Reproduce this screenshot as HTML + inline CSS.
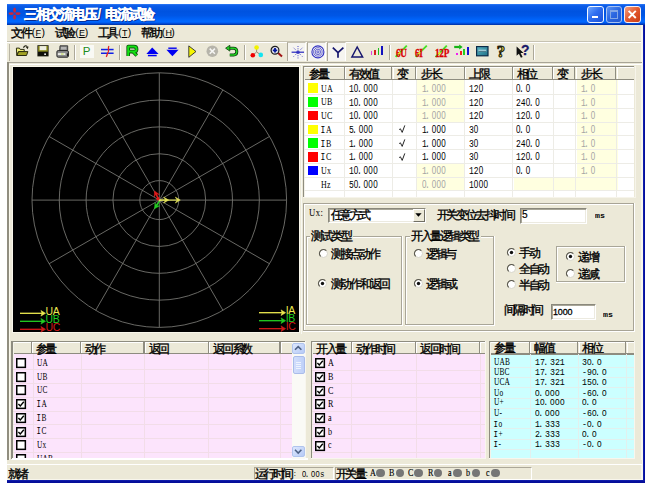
<!DOCTYPE html><html><head><meta charset="utf-8"><title>三相交流电压/电流试验</title><style>
html,body{margin:0;padding:0;}
body{width:647px;height:487px;position:relative;overflow:hidden;background:#fff;font-family:"Liberation Sans",sans-serif;}
.t{position:absolute;white-space:nowrap;font-family:"Liberation Sans",sans-serif;}
.m{font-family:"Liberation Mono",monospace;transform-origin:0 0;}
.z{font-style:normal;font-family:"Liberation Sans",sans-serif;letter-spacing:0.044em;line-height:0;}
.c{font-style:normal;display:inline-block;text-align:center;overflow:visible;-webkit-text-stroke:0.35px currentColor;}
.mi{font-style:normal;font-family:"Liberation Mono",monospace;line-height:0;margin-left:-0.06em;margin-right:0.06em;}
.p{font-style:normal;margin-left:-0.22em;margin-right:0.22em;line-height:0;}
svg{position:absolute;overflow:visible;}
</style></head><body>
<div style="position:absolute;left:7px;top:25px;width:635px;height:455px;background:#ECE9D8"></div>
<div style="position:absolute;left:641.2px;top:25px;width:1.4px;height:455px;background:#F8F6EC"></div>
<div style="position:absolute;left:642.6px;top:25px;width:2.6px;height:458px;background:linear-gradient(to right,#1C2CB8,#0612A2 40%,#040C98)"></div>
<div style="position:absolute;left:7px;top:478.7px;width:634.2px;height:1.2px;background:#F8F6EC"></div>
<div style="position:absolute;left:7px;top:479.9px;width:638.2px;height:2.9px;background:linear-gradient(to bottom,#1626B0,#06109E 40%,#040C96)"></div>
<div style="position:absolute;left:7px;top:4px;width:638px;height:21px;background:linear-gradient(to bottom,#2F7AF6 0%,#0C5CE8 8%,#0053E0 35%,#0056E6 55%,#0064FA 75%,#0068FF 84%,#0058EC 91%,#003CBC 95%,#0034A8 100%)"></div>
<svg style="left:8px;top:7px" width="14" height="14" viewBox="0 0 14 14"><g fill="#C8283C"><ellipse cx="6.6" cy="3.2" rx="1.4" ry="2.6"/><ellipse cx="6.6" cy="10" rx="1.4" ry="2.6"/><ellipse cx="3.2" cy="6.6" rx="2.6" ry="1.4"/><ellipse cx="10" cy="6.6" rx="2.6" ry="1.4"/></g></svg>
<div class="t" style="left:23.95px;top:8px;font-size:13.8px;line-height:13.8px;color:#fff;font-weight:bold;text-shadow:1px 1px 0 #0A2A8A;"><i class="c" style="width:12px">三</i><i class="c" style="width:12px">相</i><i class="c" style="width:12px">交</i><i class="c" style="width:12px">流</i><i class="c" style="width:12px">电</i><i class="c" style="width:12px">压</i></div>
<div class="t" style="left:97.46px;top:8px;font-size:13.81px;line-height:13.81px;font-family:'Liberation Sans',sans-serif;color:#fff;font-weight:bold;text-shadow:1px 1px 0 #0A2A8A;">/</div>
<div class="t" style="left:104.95px;top:8px;font-size:13.8px;line-height:13.8px;color:#fff;font-weight:bold;text-shadow:1px 1px 0 #0A2A8A;"><i class="c" style="width:12px">电</i><i class="c" style="width:12px">流</i><i class="c" style="width:12px">试</i><i class="c" style="width:12px">验</i></div>
<div style="position:absolute;left:587.2px;top:5.7px;width:14.4px;height:15px;border:1px solid #F4F8FF;border-radius:3px;background:linear-gradient(135deg,#6FA8FF 0%,#2F6EF0 45%,#1A50D8 100%)"></div>
<div style="position:absolute;left:591.5px;top:15.6px;width:6px;height:2.2px;background:#fff"></div>
<div style="position:absolute;left:605.8px;top:5.7px;width:14.4px;height:15px;border:1px solid #A8C2F0;border-radius:3px;background:linear-gradient(135deg,#5A92F4 0%,#2A66E0 50%,#2458D0 100%)"></div>
<div style="position:absolute;left:609.6px;top:9.8px;width:6.4px;height:5.8px;border:1px solid #82A6E6;border-top-width:2px"></div>
<div style="position:absolute;left:624.2px;top:5.7px;width:14.4px;height:15px;border:1px solid #F8F0F0;border-radius:3px;background:linear-gradient(135deg,#F4A080 0%,#E2582E 50%,#C83C14 100%)"></div>
<svg style="left:624.2px;top:5.7px" width="17" height="17" viewBox="0 0 17 17"><path d="M4.6 4.8 L11.8 12 M11.8 4.8 L4.6 12" stroke="#fff" stroke-width="1.9"/></svg>
<div class="t" style="left:11.15px;top:27px;font-size:12px;line-height:12px;color:#000;"><i class="c" style="width:9.7px">文</i><i class="c" style="width:9.7px">件</i></div>
<div class="t" style="left:31.77px;top:28px;font-size:10.47px;line-height:10.47px;font-family:'Liberation Sans',sans-serif;color:#000;">(</div>
<div class="t" style="left:35.48px;top:29px;font-size:9.01px;line-height:9.01px;font-family:'Liberation Sans',sans-serif;color:#000;text-decoration:underline;">F</div>
<div class="t" style="left:41.38px;top:28px;font-size:10.47px;line-height:10.47px;font-family:'Liberation Sans',sans-serif;color:#000;">)</div>
<div class="t" style="left:54.55px;top:27px;font-size:12px;line-height:12px;color:#000;"><i class="c" style="width:9.7px">试</i><i class="c" style="width:9.7px">验</i></div>
<div class="t" style="left:75.17px;top:28px;font-size:10.47px;line-height:10.47px;font-family:'Liberation Sans',sans-serif;color:#000;">(</div>
<div class="t" style="left:78.88px;top:29px;font-size:9.01px;line-height:9.01px;font-family:'Liberation Sans',sans-serif;color:#000;text-decoration:underline;">E</div>
<div class="t" style="left:84.78px;top:28px;font-size:10.47px;line-height:10.47px;font-family:'Liberation Sans',sans-serif;color:#000;">)</div>
<div class="t" style="left:97.55px;top:27px;font-size:12px;line-height:12px;color:#000;"><i class="c" style="width:9.7px">工</i><i class="c" style="width:9.7px">具</i></div>
<div class="t" style="left:118.17px;top:28px;font-size:10.47px;line-height:10.47px;font-family:'Liberation Sans',sans-serif;color:#000;">(</div>
<div class="t" style="left:121.88px;top:29px;font-size:9.01px;line-height:9.01px;font-family:'Liberation Sans',sans-serif;color:#000;text-decoration:underline;">T</div>
<div class="t" style="left:127.78px;top:28px;font-size:10.47px;line-height:10.47px;font-family:'Liberation Sans',sans-serif;color:#000;">)</div>
<div class="t" style="left:141.05px;top:27px;font-size:12px;line-height:12px;color:#000;"><i class="c" style="width:9.7px">帮</i><i class="c" style="width:9.7px">助</i></div>
<div class="t" style="left:161.67px;top:28px;font-size:10.47px;line-height:10.47px;font-family:'Liberation Sans',sans-serif;color:#000;">(</div>
<div class="t" style="left:165.38px;top:29px;font-size:9.01px;line-height:9.01px;font-family:'Liberation Sans',sans-serif;color:#000;text-decoration:underline;">H</div>
<div class="t" style="left:171.28px;top:28px;font-size:10.47px;line-height:10.47px;font-family:'Liberation Sans',sans-serif;color:#000;">)</div>
<div style="position:absolute;left:7px;top:40.9px;width:634.2px;height:1.1px;background:#C6C2B2"></div>
<div style="position:absolute;left:7px;top:42px;width:634.2px;height:1.1px;background:#FFFFFF"></div>
<div style="position:absolute;left:7px;top:61.9px;width:635px;height:1.1px;background:#A8A496"></div>
<div style="position:absolute;left:8.6px;top:63.7px;width:633.4px;height:1.1px;background:#FFFFFF"></div>
<div style="position:absolute;left:9.3px;top:43.5px;width:1.1px;height:17px;background:#B8B4A4"></div>
<svg style="left:15px;top:44px" width="14" height="13" viewBox="0 0 14 13"><path d="M1.4 4.1 L4.4 4.1 L5.2 5.4 L9.2 5.4 L9.2 7.6 L3.5 7.6 L1.8 11.4 Z" fill="#EEEE78" stroke="#2A2A10" stroke-width="1"/><path d="M1.9 11.5 L3.6 7.6 L12.9 7.6 L11.5 11.5 Z" fill="#A2A224" stroke="#2A2A10" stroke-width="1" stroke-linejoin="round"/><path d="M8.4 3.6 Q10.2 0.4 12.4 2.8" fill="none" stroke="#262618" stroke-width="1.2"/><path d="M10.8 3.2 L13.6 2.4 L12.8 5.2 Z" fill="#262618"/></svg>
<svg style="left:36.5px;top:45.4px" width="12" height="12" viewBox="0 0 12 12"><rect x="0.4" y="0.2" width="11.2" height="11.2" fill="#1C1C10"/><rect x="1.2" y="1" width="9.6" height="5.8" fill="#8C8C18"/><rect x="2.6" y="1.1" width="6.8" height="4.1" fill="#EEEEE2"/><rect x="1.2" y="6.8" width="9.6" height="3.8" fill="#0E0E08"/><rect x="7.3" y="8.4" width="1.6" height="1.6" fill="#fff"/></svg>
<svg style="left:55.5px;top:44.5px" width="13" height="13" viewBox="0 0 13 13"><path d="M4 0.8 L11.7 0.8 L11.7 5.6 L3.7 5.6 Z" fill="#8A8A8A" stroke="#303030" stroke-width="0.9"/><rect x="5" y="2" width="5.2" height="2.4" fill="#B4B4B4"/><rect x="0.9" y="5.6" width="11.5" height="6.6" rx="1.3" fill="#8E8E8E" stroke="#262626" stroke-width="1"/><rect x="1.8" y="8.2" width="7.6" height="1.7" fill="#F4F4F0"/><rect x="5" y="8.4" width="2.6" height="1.3" fill="#C8E070"/><rect x="10.9" y="8.4" width="1.5" height="2.6" fill="#1E1E1E"/></svg>
<div style="position:absolute;left:74px;top:44.6px;width:1.1px;height:15.2px;background:#ACA899"></div>
<div style="position:absolute;left:75.1px;top:44.6px;width:1px;height:15.2px;background:#FFFFFF"></div>
<div style="position:absolute;left:79.6px;top:45px;width:14.4px;height:13px;background:#F9F9F5"></div>
<div class="t" style="left:82.66px;top:46px;font-size:11.48px;line-height:11.48px;font-family:'Liberation Sans',sans-serif;color:#1C8C1C;">P</div>
<svg style="left:100.5px;top:45px" width="13" height="13" viewBox="0 0 13 13"><rect x="0" y="3.8" width="12.6" height="1.5" fill="#1020E8"/><rect x="0" y="7.5" width="12.6" height="1.5" fill="#1020E8"/><path d="M7.9 1 C6.4 3.4 8.6 5.4 7 7.6 C5.8 9.2 6.4 10.4 5.2 11.8" fill="none" stroke="#E42020" stroke-width="1.3"/></svg>
<div style="position:absolute;left:119.3px;top:44.6px;width:1.1px;height:15.2px;background:#ACA899"></div>
<div style="position:absolute;left:120.4px;top:44.6px;width:1px;height:15.2px;background:#FFFFFF"></div>
<svg style="left:125.5px;top:45.4px" width="13" height="12" viewBox="0 0 13 12"><path d="M2.2 11 L2.2 1.6 L8 1.6 Q10.6 1.6 10.6 4.2 Q10.6 6.6 8 6.6 L2.2 6.6 M6.8 6.6 L10.8 10.6" fill="none" stroke="#0A4A0A" stroke-width="3.6" stroke-linejoin="round"/><path d="M2.2 11 L2.2 1.6 L8 1.6 Q10.6 1.6 10.6 4.2 Q10.6 6.6 8 6.6 L2.2 6.6 M6.8 6.6 L10.8 10.6" fill="none" stroke="#14E014" stroke-width="2" stroke-linejoin="round"/></svg>
<svg style="left:145.6px;top:46.6px" width="13" height="10" viewBox="0 0 13 10"><path d="M0.4 6.9 L6.2 0.4 L12.6 6.9 Z" fill="#0000F2"/><rect x="1.9" y="7.8" width="8.8" height="1.5" fill="#0000F2"/></svg>
<svg style="left:165.6px;top:46.9px" width="13" height="10" viewBox="0 0 13 10"><rect x="2.3" y="0.5" width="8.4" height="1.4" fill="#0000F2"/><path d="M0.4 2.8 L12.6 2.8 L6.4 9.3 Z" fill="#0000F2"/></svg>
<svg style="left:188px;top:44.5px" width="9" height="13" viewBox="0 0 9 13"><path d="M0.8 0.9 L8 6.5 L0.8 12.3 Z" fill="#F6F600" stroke="#2C2C2C" stroke-width="0.9"/></svg>
<svg style="left:205.5px;top:45.2px" width="13" height="13" viewBox="0 0 13 13"><circle cx="6.3" cy="6.2" r="5.8" fill="#B6B4AA"/><path d="M3.7 3.6 L8.9 8.8 M8.9 3.6 L3.7 8.8" stroke="#F6F6F4" stroke-width="1.5"/></svg>
<svg style="left:225.2px;top:45.2px" width="14" height="13" viewBox="0 0 14 13"><path d="M4 3.2 L8.6 3.2 Q11.8 3.2 11.8 6.6 Q11.8 10 8.6 10 L4.8 10" fill="none" stroke="#0E3E0E" stroke-width="3"/><path d="M4 3.2 L8.6 3.2 Q11.8 3.2 11.8 6.6 Q11.8 10 8.6 10 L4.8 10" fill="none" stroke="#22D022" stroke-width="1.5"/><path d="M0.6 3.2 L4.8 0.3 L4.8 6.1 Z" fill="#22D022" stroke="#0E3E0E" stroke-width="0.8"/></svg>
<div style="position:absolute;left:244px;top:44.6px;width:1.1px;height:15.2px;background:#ACA899"></div>
<div style="position:absolute;left:245.1px;top:44.6px;width:1px;height:15.2px;background:#FFFFFF"></div>
<svg style="left:249.5px;top:44.6px" width="14" height="14" viewBox="0 0 14 14"><path d="M6.6 7 L6.6 2.6 M6.6 7 L2.8 10.3 M6.6 7 L10.8 9.8" stroke="#9A8A7A" stroke-width="1"/><circle cx="6.6" cy="2.5" r="2.3" fill="#F2F200"/><circle cx="2.8" cy="10.3" r="2.3" fill="#F00000"/><circle cx="10.8" cy="9.9" r="2.3" fill="#14E4F0"/></svg>
<svg style="left:270px;top:45.4px" width="14" height="13" viewBox="0 0 14 13"><path d="M7.6 7.6 L12 11.6" stroke="#A01414" stroke-width="2"/><circle cx="5" cy="5.3" r="3.9" fill="#E6E6EE" stroke="#1E1E1E" stroke-width="1.2"/><path d="M2.8 5.3 L7.2 5.3 M5 3.1 L5 7.5" stroke="#001498" stroke-width="1.8"/></svg>
<div style="position:absolute;left:287.2px;top:42.3px;width:19.2px;height:18.8px;background:#F6F5F0;border-left:1.2px solid #ACA899;border-top:1px solid #C6C2B2;border-right:1px solid #fff;box-sizing:border-box"></div>
<div style="position:absolute;left:307.2px;top:42.3px;width:19.2px;height:18.8px;background:#F6F5F0;border-left:1.2px solid #ACA899;border-top:1px solid #C6C2B2;border-right:1px solid #fff;box-sizing:border-box"></div>
<div style="position:absolute;left:327.1px;top:42.3px;width:19.2px;height:18.8px;background:#F6F5F0;border-left:1.2px solid #ACA899;border-top:1px solid #C6C2B2;border-right:1px solid #fff;box-sizing:border-box"></div>
<svg style="left:290.5px;top:45px" width="14" height="14" viewBox="0 0 14 14"><path d="M0.6 7.2 L13 7.2" stroke="#2626BE" stroke-width="1.2"/><circle cx="7" cy="7.2" r="1.6" fill="#2626BE"/><g stroke="#4A4AC6" stroke-width="1" stroke-dasharray="1 1.3"><path d="M7 1 L7 13.4"/><path d="M2.6 2.8 L11.4 11.6"/><path d="M11.4 2.8 L2.6 11.6"/></g></svg>
<svg style="left:311px;top:45px" width="14" height="14" viewBox="0 0 14 14"><g fill="none" stroke="#3434C4"><circle cx="6.9" cy="6.9" r="6" stroke-width="1.1"/><circle cx="6.9" cy="6.9" r="4.3" stroke-width="0.75"/><circle cx="6.9" cy="6.9" r="2.7" stroke-width="0.75"/><circle cx="6.9" cy="6.9" r="1.1" stroke-width="0.8"/></g></svg>
<svg style="left:331.5px;top:46.5px" width="13" height="12" viewBox="0 0 13 12"><path d="M0.8 0.6 L6 5.6 L11.4 0.6 M6 5.6 L6 10.8" fill="none" stroke="#16166E" stroke-width="1.7"/></svg>
<svg style="left:350.5px;top:45.5px" width="14" height="13" viewBox="0 0 14 13"><path d="M6.2 1 L11.6 10.9 L0.9 10.9 Z" fill="none" stroke="#16166E" stroke-width="1.5"/></svg>
<div style="position:absolute;left:370.6px;top:51.1px;width:1.9px;height:3.7px;background:#E040E0"></div>
<div style="position:absolute;left:374.2px;top:49.7px;width:1.6px;height:5.1px;background:#D42020"></div>
<div style="position:absolute;left:377.5px;top:47.9px;width:1.6px;height:6.9px;background:#20C020"></div>
<div style="position:absolute;left:380.8px;top:46px;width:1.9px;height:8.8px;background:#1212BE"></div>
<div style="position:absolute;left:388.7px;top:44.6px;width:1.1px;height:15.2px;background:#ACA899"></div>
<div style="position:absolute;left:389.8px;top:44.6px;width:1px;height:15.2px;background:#FFFFFF"></div>
<svg style="left:395.2px;top:44.8px" width="13" height="13" viewBox="0 0 13 13"><path d="M0.6 11.8 L11.8 0.6" stroke="#44E024" stroke-width="1.8"/></svg>
<div class="t" style="left:395.52px;top:48px;font-size:11.48px;line-height:11.48px;font-family:'Liberation Serif',sans-serif;color:#E00000;font-weight:bold;transform:scaleX(0.8);transform-origin:0 0;letter-spacing:-0.3px;-webkit-text-stroke:0.3px #D00000;">6U</div>
<svg style="left:395.2px;top:44.8px" width="13" height="13" viewBox="0 0 13 13"><path d="M3.4 9 L5.2 7.2" stroke="#F0F020" stroke-width="1.6"/></svg>
<svg style="left:414.9px;top:44.8px" width="13" height="13" viewBox="0 0 13 13"><path d="M0.6 11.8 L11.8 0.6" stroke="#44E024" stroke-width="1.8"/></svg>
<div class="t" style="left:415.22px;top:48px;font-size:11.48px;line-height:11.48px;font-family:'Liberation Serif',sans-serif;color:#E00000;font-weight:bold;transform:scaleX(0.8);transform-origin:0 0;letter-spacing:-0.3px;-webkit-text-stroke:0.3px #D00000;">6I</div>
<svg style="left:414.9px;top:44.8px" width="13" height="13" viewBox="0 0 13 13"><path d="M3.4 9 L5.2 7.2" stroke="#F0F020" stroke-width="1.6"/></svg>
<svg style="left:434.7px;top:44.8px" width="13" height="13" viewBox="0 0 13 13"><path d="M0.6 11.8 L11.8 0.6" stroke="#44E024" stroke-width="1.8"/></svg>
<div class="t" style="left:435.02px;top:48px;font-size:11.48px;line-height:11.48px;font-family:'Liberation Serif',sans-serif;color:#E00000;font-weight:bold;transform:scaleX(0.8);transform-origin:0 0;letter-spacing:-0.3px;-webkit-text-stroke:0.3px #D00000;">12P</div>
<svg style="left:434.7px;top:44.8px" width="13" height="13" viewBox="0 0 13 13"><path d="M3.4 9 L5.2 7.2" stroke="#F0F020" stroke-width="1.6"/></svg>
<svg style="left:454.3px;top:44.6px" width="10" height="5" viewBox="0 0 10 5"><path d="M0.2 2 L5.6 2" stroke="#14B414" stroke-width="2.2"/><path d="M5.2 -0.6 L8.6 2 L5.2 4.6 Z" fill="#14B414"/></svg>
<div style="position:absolute;left:456.3px;top:52.8px;width:2.1px;height:2.6px;background:#F020F0"></div>
<div style="position:absolute;left:459.6px;top:50.6px;width:2px;height:4.8px;background:#F02020"></div>
<div style="position:absolute;left:463.1px;top:48.6px;width:2.1px;height:6.8px;background:#20D020"></div>
<div style="position:absolute;left:466.6px;top:46.8px;width:2px;height:8.6px;background:#1414D0"></div>
<svg style="left:475.6px;top:46.2px" width="13" height="11" viewBox="0 0 13 11"><defs><linearGradient id="mg" x1="0" y1="0" x2="1" y2="1"><stop offset="0" stop-color="#5AB8C8"/><stop offset="1" stop-color="#1E6E84"/></linearGradient></defs><rect x="0.6" y="0.6" width="11.4" height="9.2" fill="url(#mg)" stroke="#0A2A48" stroke-width="1.2"/><rect x="2.4" y="3.6" width="7.8" height="2.4" fill="#9CC8D4"/><rect x="2.4" y="5.2" width="7.8" height="0.8" fill="#3A6A7A"/></svg>
<div class="t" style="left:496.73px;top:44px;font-size:16.72px;line-height:16.72px;font-family:'Liberation Serif',sans-serif;color:#F0E040;font-weight:bold;-webkit-text-stroke:1.1px #1E1E10;">?</div>
<svg style="left:515.5px;top:45.6px" width="9" height="13" viewBox="0 0 9 13"><path d="M0.6 0.4 L0.6 9.8 L2.9 7.8 L4.9 11.8 L6.6 11 L4.6 7.1 L7.6 7.1 Z" fill="#101010"/></svg>
<div class="t" style="left:520.9px;top:44px;font-size:13.95px;line-height:13.95px;font-family:'Liberation Sans',sans-serif;color:#1A1A6A;font-weight:bold;-webkit-text-stroke:0.3px #1A1A6A;">?</div>
<div style="position:absolute;left:532.8px;top:44.6px;width:1.1px;height:15.2px;background:#ACA899"></div>
<div style="position:absolute;left:533.9px;top:44.6px;width:1px;height:15.2px;background:#FFFFFF"></div>
<div style="position:absolute;left:7px;top:62px;width:2px;height:402px;background:#918E80"></div>
<div style="position:absolute;left:9px;top:63.6px;width:1.4px;height:396px;background:#FAF8EC"></div>
<div style="position:absolute;left:12px;top:65.6px;width:288.4px;height:267.9px;background:#F8F6EA"></div>
<div style="position:absolute;left:13.3px;top:67.1px;width:285.7px;height:264.6px;background:#000"></div>
<div style="position:absolute;left:300.8px;top:64px;width:1.2px;height:270px;background:#F8F8F2"></div>
<svg style="left:0;top:0" width="647" height="487" viewBox="0 0 647 487"><g stroke="#767672" stroke-width="0.88" fill="none"><circle cx="159.3" cy="200.1" r="19.5"/><circle cx="159.3" cy="200.1" r="46.35"/><circle cx="159.3" cy="200.1" r="73.2"/><circle cx="159.3" cy="200.1" r="100.05"/><circle cx="159.3" cy="200.1" r="127.3"/><line x1="159.3" y1="200.1" x2="286.60" y2="200.10"/><line x1="159.3" y1="200.1" x2="269.55" y2="136.45"/><line x1="159.3" y1="200.1" x2="222.95" y2="89.85"/><line x1="159.3" y1="200.1" x2="159.30" y2="72.80"/><line x1="159.3" y1="200.1" x2="95.65" y2="89.85"/><line x1="159.3" y1="200.1" x2="49.05" y2="136.45"/><line x1="159.3" y1="200.1" x2="32.00" y2="200.10"/><line x1="159.3" y1="200.1" x2="49.05" y2="263.75"/><line x1="159.3" y1="200.1" x2="95.65" y2="310.35"/><line x1="159.3" y1="200.1" x2="159.30" y2="327.40"/><line x1="159.3" y1="200.1" x2="222.95" y2="310.35"/><line x1="159.3" y1="200.1" x2="269.55" y2="263.75"/></g><path d="M159.30 200.10 L177.20 200.10" stroke="#E2E25A" stroke-width="1.1" fill="none"/><path d="M180.30 200.10 L175.30 203.10 L177.20 200.10 L175.30 197.10 Z" fill="#E2E25A" stroke="#E2E25A" stroke-width="0.5" stroke-linejoin="round"/><path d="M159.30 200.10 L165.60 200.10" stroke="#E2E25A" stroke-width="1.1" fill="none"/><path d="M168.70 200.10 L163.70 203.10 L165.60 200.10 L163.70 197.10 Z" fill="#E2E25A" stroke="#E2E25A" stroke-width="0.5" stroke-linejoin="round"/><path d="M158.60 199.40 L155.95 193.92" stroke="#E01A1A" stroke-width="1.5" fill="none"/><path d="M154.50 190.90 L159.37 194.55 L155.95 193.92 L154.32 196.98 Z" fill="#E01A1A" stroke="#E01A1A" stroke-width="0.5" stroke-linejoin="round"/><path d="M159.60 200.80 L156.30 205.98" stroke="#22D022" stroke-width="1.5" fill="none"/><path d="M154.50 208.80 L155.04 202.74 L156.30 205.98 L159.76 205.75 Z" fill="#22D022" stroke="#22D022" stroke-width="0.5" stroke-linejoin="round"/><circle cx="158" cy="198.8" r="1.7" fill="#E01A1A"/><circle cx="159.8" cy="200.4" r="1" fill="#E2E25A"/></svg>
<svg style="left:0;top:0" width="647" height="487" viewBox="0 0 647 487"><path d="M20 313.3 L42.5 313.3" stroke="#EEEA50" stroke-width="1.3" fill="none"/><path d="M40.9 310.5 L45.5 313.3 L40.9 316.1 L42.1 313.3 Z" fill="#EEEA50" stroke="#EEEA50" stroke-width="0.6"/><path d="M259 312.7 L282.6 312.7" stroke="#EEEA50" stroke-width="1.3" fill="none"/><path d="M281.0 309.9 L285.6 312.7 L281.0 315.5 L282.20000000000005 312.7 Z" fill="#EEEA50" stroke="#EEEA50" stroke-width="0.6"/><path d="M20 321.3 L42.5 321.3" stroke="#22D022" stroke-width="1.3" fill="none"/><path d="M40.9 318.5 L45.5 321.3 L40.9 324.1 L42.1 321.3 Z" fill="#22D022" stroke="#22D022" stroke-width="0.6"/><path d="M259 320.7 L282.6 320.7" stroke="#22D022" stroke-width="1.3" fill="none"/><path d="M281.0 317.9 L285.6 320.7 L281.0 323.5 L282.20000000000005 320.7 Z" fill="#22D022" stroke="#22D022" stroke-width="0.6"/><path d="M20 329.3 L42.5 329.3" stroke="#D41A1A" stroke-width="1.3" fill="none"/><path d="M40.9 326.5 L45.5 329.3 L40.9 332.1 L42.1 329.3 Z" fill="#D41A1A" stroke="#D41A1A" stroke-width="0.6"/><path d="M259 328.7 L282.6 328.7" stroke="#D41A1A" stroke-width="1.3" fill="none"/><path d="M281.0 325.9 L285.6 328.7 L281.0 331.5 L282.20000000000005 328.7 Z" fill="#D41A1A" stroke="#D41A1A" stroke-width="0.6"/></svg>
<div class="t" style="left:45.59px;top:307px;font-size:10.47px;line-height:10.47px;font-family:'Liberation Sans',sans-serif;color:#EEEA50;letter-spacing:-0.3px;">UA</div>
<div class="t" style="left:45.59px;top:315px;font-size:10.47px;line-height:10.47px;font-family:'Liberation Sans',sans-serif;color:#22D022;letter-spacing:-0.3px;">UB</div>
<div class="t" style="left:45.59px;top:323px;font-size:10.47px;line-height:10.47px;font-family:'Liberation Sans',sans-serif;color:#D41A1A;letter-spacing:-0.3px;">UC</div>
<div class="t" style="left:285.86px;top:306px;font-size:10.47px;line-height:10.47px;font-family:'Liberation Sans',sans-serif;color:#EEEA50;letter-spacing:-0.5px;">IA</div>
<div class="t" style="left:285.86px;top:314px;font-size:10.47px;line-height:10.47px;font-family:'Liberation Sans',sans-serif;color:#22D022;letter-spacing:-0.5px;">IB</div>
<div class="t" style="left:285.86px;top:322px;font-size:10.47px;line-height:10.47px;font-family:'Liberation Sans',sans-serif;color:#D41A1A;letter-spacing:-0.5px;">IC</div>
<div style="position:absolute;left:303.3px;top:66.2px;width:331.2px;height:130.8px;background:#fff"></div>
<div style="position:absolute;left:303.3px;top:66.2px;width:1px;height:130.8px;background:#8E8C80"></div>
<div style="position:absolute;left:304.3px;top:67.2px;width:0.9px;height:129.6px;background:#F4F2E8"></div>
<div style="position:absolute;left:303.3px;top:66.2px;width:331.2px;height:1.1px;background:#8E8C80"></div>
<div style="position:absolute;left:305.2px;top:67.3px;width:329.3px;height:11.6px;background:#ECE9D8"></div>
<div style="position:absolute;left:305.2px;top:67.3px;width:329.3px;height:0.9px;background:#FFFFFF"></div>
<div style="position:absolute;left:305.2px;top:78.9px;width:329.3px;height:1.2px;background:#8E8C80"></div>
<div style="position:absolute;left:343.5px;top:67.3px;width:1.1px;height:11.6px;background:#8E8C80"></div>
<div style="position:absolute;left:344.6px;top:68.2px;width:0.9px;height:10.7px;background:#FFFFFF"></div>
<div style="position:absolute;left:391.4px;top:67.3px;width:1.1px;height:11.6px;background:#8E8C80"></div>
<div style="position:absolute;left:392.5px;top:68.2px;width:0.9px;height:10.7px;background:#FFFFFF"></div>
<div style="position:absolute;left:415.2px;top:67.3px;width:1.1px;height:11.6px;background:#8E8C80"></div>
<div style="position:absolute;left:416.3px;top:68.2px;width:0.9px;height:10.7px;background:#FFFFFF"></div>
<div style="position:absolute;left:463.7px;top:67.3px;width:1.1px;height:11.6px;background:#8E8C80"></div>
<div style="position:absolute;left:464.8px;top:68.2px;width:0.9px;height:10.7px;background:#FFFFFF"></div>
<div style="position:absolute;left:511.5px;top:67.3px;width:1.1px;height:11.6px;background:#8E8C80"></div>
<div style="position:absolute;left:512.6px;top:68.2px;width:0.9px;height:10.7px;background:#FFFFFF"></div>
<div style="position:absolute;left:551.9px;top:67.3px;width:1.1px;height:11.6px;background:#8E8C80"></div>
<div style="position:absolute;left:553px;top:68.2px;width:0.9px;height:10.7px;background:#FFFFFF"></div>
<div style="position:absolute;left:574.4px;top:67.3px;width:1.1px;height:11.6px;background:#8E8C80"></div>
<div style="position:absolute;left:575.5px;top:68.2px;width:0.9px;height:10.7px;background:#FFFFFF"></div>
<div style="position:absolute;left:615.4px;top:67.3px;width:1.1px;height:11.6px;background:#8E8C80"></div>
<div style="position:absolute;left:616.5px;top:68.2px;width:0.9px;height:10.7px;background:#FFFFFF"></div>
<div style="position:absolute;left:634.5px;top:66.2px;width:1px;height:131.4px;background:#F6F4EA"></div>
<div style="position:absolute;left:303.3px;top:196.6px;width:332.2px;height:1px;background:#F6F4EA"></div>
<div class="t" style="left:308.55px;top:68px;font-size:12px;line-height:12px;color:#000;"><i class="c" style="width:9.6px">参</i><i class="c" style="width:9.6px">量</i></div>
<div class="t" style="left:349.05px;top:68px;font-size:12px;line-height:12px;color:#000;"><i class="c" style="width:9.6px">有</i><i class="c" style="width:9.6px">效</i><i class="c" style="width:9.6px">值</i></div>
<div class="t" style="left:396.95px;top:68px;font-size:12px;line-height:12px;color:#000;"><i class="c" style="width:9.6px">变</i></div>
<div class="t" style="left:421.25px;top:68px;font-size:12px;line-height:12px;color:#000;"><i class="c" style="width:9.6px">步</i><i class="c" style="width:9.6px">长</i></div>
<div class="t" style="left:469.15px;top:68px;font-size:12px;line-height:12px;color:#000;"><i class="c" style="width:9.6px">上</i><i class="c" style="width:9.6px">限</i></div>
<div class="t" style="left:516.55px;top:68px;font-size:12px;line-height:12px;color:#000;"><i class="c" style="width:9.6px">相</i><i class="c" style="width:9.6px">位</i></div>
<div class="t" style="left:556.55px;top:68px;font-size:12px;line-height:12px;color:#000;"><i class="c" style="width:9.6px">变</i></div>
<div class="t" style="left:581.05px;top:68px;font-size:12px;line-height:12px;color:#000;"><i class="c" style="width:9.6px">步</i><i class="c" style="width:9.6px">长</i></div>
<div style="position:absolute;left:417.3px;top:80.1px;width:47.5px;height:14.1px;background:#FFFFE0"></div>
<div style="position:absolute;left:576.5px;top:80.1px;width:41px;height:14.1px;background:#FFFFE0"></div>
<div style="position:absolute;left:417.3px;top:94.2px;width:47.5px;height:13.72px;background:#FFFFE0"></div>
<div style="position:absolute;left:576.5px;top:94.2px;width:41px;height:13.72px;background:#FFFFE0"></div>
<div style="position:absolute;left:417.3px;top:107.92px;width:47.5px;height:13.72px;background:#FFFFE0"></div>
<div style="position:absolute;left:576.5px;top:107.92px;width:41px;height:13.72px;background:#FFFFE0"></div>
<div style="position:absolute;left:576.5px;top:121.64px;width:41px;height:13.72px;background:#FFFFE0"></div>
<div style="position:absolute;left:576.5px;top:135.36px;width:41px;height:13.72px;background:#FFFFE0"></div>
<div style="position:absolute;left:576.5px;top:149.08px;width:41px;height:13.72px;background:#FFFFE0"></div>
<div style="position:absolute;left:417.3px;top:162.8px;width:47.5px;height:13.72px;background:#FFFFE0"></div>
<div style="position:absolute;left:576.5px;top:162.8px;width:41px;height:13.72px;background:#FFFFE0"></div>
<div style="position:absolute;left:417.3px;top:176.52px;width:47.5px;height:13.72px;background:#FFFFE0"></div>
<div style="position:absolute;left:576.5px;top:176.52px;width:41px;height:13.72px;background:#FFFFE0"></div>
<div style="position:absolute;left:513.6px;top:176.52px;width:104px;height:13.72px;background:#FFFFE0"></div>
<div style="position:absolute;left:304.4px;top:94.2px;width:329.2px;height:1px;background:#EDECE6"></div>
<div style="position:absolute;left:304.4px;top:107.92px;width:329.2px;height:1px;background:#EDECE6"></div>
<div style="position:absolute;left:304.4px;top:121.64px;width:329.2px;height:1px;background:#EDECE6"></div>
<div style="position:absolute;left:304.4px;top:135.36px;width:329.2px;height:1px;background:#EDECE6"></div>
<div style="position:absolute;left:304.4px;top:149.08px;width:329.2px;height:1px;background:#EDECE6"></div>
<div style="position:absolute;left:304.4px;top:162.8px;width:329.2px;height:1px;background:#EDECE6"></div>
<div style="position:absolute;left:304.4px;top:176.52px;width:329.2px;height:1px;background:#EDECE6"></div>
<div style="position:absolute;left:304.4px;top:190.24px;width:329.2px;height:1px;background:#EDECE6"></div>
<div style="position:absolute;left:344.1px;top:79.5px;width:1px;height:117px;background:#EDECE6"></div>
<div style="position:absolute;left:392px;top:79.5px;width:1px;height:117px;background:#EDECE6"></div>
<div style="position:absolute;left:415.8px;top:79.5px;width:1px;height:117px;background:#EDECE6"></div>
<div style="position:absolute;left:464.3px;top:79.5px;width:1px;height:117px;background:#EDECE6"></div>
<div style="position:absolute;left:512.1px;top:79.5px;width:1px;height:117px;background:#EDECE6"></div>
<div style="position:absolute;left:552.5px;top:79.5px;width:1px;height:117px;background:#EDECE6"></div>
<div style="position:absolute;left:575px;top:79.5px;width:1px;height:117px;background:#EDECE6"></div>
<div style="position:absolute;left:616px;top:79.5px;width:1px;height:117px;background:#EDECE6"></div>
<div style="position:absolute;left:307.9px;top:83.4px;width:9.9px;height:9.5px;background:#FFFF00"></div>
<div class="t" style="left:320.84px;top:84px;font-size:10.23px;line-height:10.23px;font-family:'Liberation Serif',serif;color:#000;transform:scaleX(0.78);transform-origin:0 0;letter-spacing:0.3px;">UA</div>
<div class="t m" style="left:349.34px;top:84px;font-size:10.32px;line-height:10.32px;color:#000;transform:scaleX(0.78);">1<i class="z">0</i><i class="p">.</i><i class="z">0</i><i class="z">0</i><i class="z">0</i></div>
<div class="t m" style="left:422.04px;top:84px;font-size:10.32px;line-height:10.32px;color:#A4A4A4;transform:scaleX(0.78);">1<i class="p">.</i><i class="z">0</i><i class="z">0</i><i class="z">0</i></div>
<div class="t m" style="left:469.14px;top:84px;font-size:10.32px;line-height:10.32px;color:#000;transform:scaleX(0.78);">12<i class="z">0</i></div>
<div class="t m" style="left:516.44px;top:84px;font-size:10.32px;line-height:10.32px;color:#000;transform:scaleX(0.78);"><i class="z">0</i><i class="p">.</i><i class="z">0</i></div>
<div class="t m" style="left:581.04px;top:84px;font-size:10.32px;line-height:10.32px;color:#A4A4A4;transform:scaleX(0.78);">1<i class="p">.</i><i class="z">0</i></div>
<div style="position:absolute;left:307.9px;top:97.12px;width:9.9px;height:9.5px;background:#00FF00"></div>
<div class="t" style="left:320.84px;top:97px;font-size:10.23px;line-height:10.23px;font-family:'Liberation Serif',serif;color:#000;transform:scaleX(0.78);transform-origin:0 0;letter-spacing:0.3px;">UB</div>
<div class="t m" style="left:349.34px;top:98px;font-size:10.32px;line-height:10.32px;color:#000;transform:scaleX(0.78);">1<i class="z">0</i><i class="p">.</i><i class="z">0</i><i class="z">0</i><i class="z">0</i></div>
<div class="t m" style="left:422.04px;top:98px;font-size:10.32px;line-height:10.32px;color:#A4A4A4;transform:scaleX(0.78);">1<i class="p">.</i><i class="z">0</i><i class="z">0</i><i class="z">0</i></div>
<div class="t m" style="left:469.14px;top:98px;font-size:10.32px;line-height:10.32px;color:#000;transform:scaleX(0.78);">12<i class="z">0</i></div>
<div class="t m" style="left:516.44px;top:98px;font-size:10.32px;line-height:10.32px;color:#000;transform:scaleX(0.78);">24<i class="z">0</i><i class="p">.</i><i class="z">0</i></div>
<div class="t m" style="left:581.04px;top:98px;font-size:10.32px;line-height:10.32px;color:#A4A4A4;transform:scaleX(0.78);">1<i class="p">.</i><i class="z">0</i></div>
<div style="position:absolute;left:307.9px;top:110.84px;width:9.9px;height:9.5px;background:#FF0000"></div>
<div class="t" style="left:320.84px;top:111px;font-size:10.23px;line-height:10.23px;font-family:'Liberation Serif',serif;color:#000;transform:scaleX(0.78);transform-origin:0 0;letter-spacing:0.3px;">UC</div>
<div class="t m" style="left:349.34px;top:111px;font-size:10.32px;line-height:10.32px;color:#000;transform:scaleX(0.78);">1<i class="z">0</i><i class="p">.</i><i class="z">0</i><i class="z">0</i><i class="z">0</i></div>
<div class="t m" style="left:422.04px;top:111px;font-size:10.32px;line-height:10.32px;color:#A4A4A4;transform:scaleX(0.78);">1<i class="p">.</i><i class="z">0</i><i class="z">0</i><i class="z">0</i></div>
<div class="t m" style="left:469.14px;top:111px;font-size:10.32px;line-height:10.32px;color:#000;transform:scaleX(0.78);">12<i class="z">0</i></div>
<div class="t m" style="left:516.44px;top:111px;font-size:10.32px;line-height:10.32px;color:#000;transform:scaleX(0.78);">12<i class="z">0</i><i class="p">.</i><i class="z">0</i></div>
<div class="t m" style="left:581.04px;top:111px;font-size:10.32px;line-height:10.32px;color:#A4A4A4;transform:scaleX(0.78);">1<i class="p">.</i><i class="z">0</i></div>
<div style="position:absolute;left:307.9px;top:124.56px;width:9.9px;height:9.5px;background:#FFFF00"></div>
<div class="t" style="left:320.55px;top:125px;font-size:10.23px;line-height:10.23px;font-family:'Liberation Serif',serif;color:#000;transform:scaleX(0.78);transform-origin:0 0;letter-spacing:0.3px;"><i class="mi">I</i>A</div>
<div class="t m" style="left:349.34px;top:125px;font-size:10.32px;line-height:10.32px;color:#000;transform:scaleX(0.78);">5<i class="p">.</i><i class="z">0</i><i class="z">0</i><i class="z">0</i></div>
<svg style="left:398px;top:125.06px" width="8" height="9" viewBox="0 0 8 9"><path d="M1.2 4.6 L2.4 3.8 L4.2 7.4 L6.8 0.4" fill="none" stroke="#1A1A1A" stroke-width="0.95" stroke-linejoin="round"/></svg>
<div class="t m" style="left:422.04px;top:125px;font-size:10.32px;line-height:10.32px;color:#000;transform:scaleX(0.78);">1<i class="p">.</i><i class="z">0</i><i class="z">0</i><i class="z">0</i></div>
<div class="t m" style="left:469.14px;top:125px;font-size:10.32px;line-height:10.32px;color:#000;transform:scaleX(0.78);">3<i class="z">0</i></div>
<div class="t m" style="left:516.44px;top:125px;font-size:10.32px;line-height:10.32px;color:#000;transform:scaleX(0.78);"><i class="z">0</i><i class="p">.</i><i class="z">0</i></div>
<div class="t m" style="left:581.04px;top:125px;font-size:10.32px;line-height:10.32px;color:#A4A4A4;transform:scaleX(0.78);">1<i class="p">.</i><i class="z">0</i></div>
<div style="position:absolute;left:307.9px;top:138.28px;width:9.9px;height:9.5px;background:#00FF00"></div>
<div class="t" style="left:320.55px;top:139px;font-size:10.23px;line-height:10.23px;font-family:'Liberation Serif',serif;color:#000;transform:scaleX(0.78);transform-origin:0 0;letter-spacing:0.3px;"><i class="mi">I</i>B</div>
<div class="t m" style="left:349.34px;top:139px;font-size:10.32px;line-height:10.32px;color:#000;transform:scaleX(0.78);">1<i class="p">.</i><i class="z">0</i><i class="z">0</i><i class="z">0</i></div>
<svg style="left:398px;top:138.78px" width="8" height="9" viewBox="0 0 8 9"><path d="M1.2 4.6 L2.4 3.8 L4.2 7.4 L6.8 0.4" fill="none" stroke="#1A1A1A" stroke-width="0.95" stroke-linejoin="round"/></svg>
<div class="t m" style="left:422.04px;top:139px;font-size:10.32px;line-height:10.32px;color:#000;transform:scaleX(0.78);">1<i class="p">.</i><i class="z">0</i><i class="z">0</i><i class="z">0</i></div>
<div class="t m" style="left:469.14px;top:139px;font-size:10.32px;line-height:10.32px;color:#000;transform:scaleX(0.78);">3<i class="z">0</i></div>
<div class="t m" style="left:516.44px;top:139px;font-size:10.32px;line-height:10.32px;color:#000;transform:scaleX(0.78);">24<i class="z">0</i><i class="p">.</i><i class="z">0</i></div>
<div class="t m" style="left:581.04px;top:139px;font-size:10.32px;line-height:10.32px;color:#A4A4A4;transform:scaleX(0.78);">1<i class="p">.</i><i class="z">0</i></div>
<div style="position:absolute;left:307.9px;top:152px;width:9.9px;height:9.5px;background:#FF0000"></div>
<div class="t" style="left:320.55px;top:152px;font-size:10.23px;line-height:10.23px;font-family:'Liberation Serif',serif;color:#000;transform:scaleX(0.78);transform-origin:0 0;letter-spacing:0.3px;"><i class="mi">I</i>C</div>
<div class="t m" style="left:349.34px;top:152px;font-size:10.32px;line-height:10.32px;color:#000;transform:scaleX(0.78);">1<i class="p">.</i><i class="z">0</i><i class="z">0</i><i class="z">0</i></div>
<svg style="left:398px;top:152.5px" width="8" height="9" viewBox="0 0 8 9"><path d="M1.2 4.6 L2.4 3.8 L4.2 7.4 L6.8 0.4" fill="none" stroke="#1A1A1A" stroke-width="0.95" stroke-linejoin="round"/></svg>
<div class="t m" style="left:422.04px;top:152px;font-size:10.32px;line-height:10.32px;color:#000;transform:scaleX(0.78);">1<i class="p">.</i><i class="z">0</i><i class="z">0</i><i class="z">0</i></div>
<div class="t m" style="left:469.14px;top:152px;font-size:10.32px;line-height:10.32px;color:#000;transform:scaleX(0.78);">3<i class="z">0</i></div>
<div class="t m" style="left:516.44px;top:152px;font-size:10.32px;line-height:10.32px;color:#000;transform:scaleX(0.78);">12<i class="z">0</i><i class="p">.</i><i class="z">0</i></div>
<div class="t m" style="left:581.04px;top:152px;font-size:10.32px;line-height:10.32px;color:#A4A4A4;transform:scaleX(0.78);">1<i class="p">.</i><i class="z">0</i></div>
<div style="position:absolute;left:307.9px;top:165.72px;width:9.9px;height:9.5px;background:#0000FF"></div>
<div class="t" style="left:320.84px;top:166px;font-size:10.23px;line-height:10.23px;font-family:'Liberation Serif',serif;color:#000;transform:scaleX(0.78);transform-origin:0 0;letter-spacing:0.3px;">Ux</div>
<div class="t m" style="left:349.34px;top:166px;font-size:10.32px;line-height:10.32px;color:#000;transform:scaleX(0.78);">1<i class="z">0</i><i class="p">.</i><i class="z">0</i><i class="z">0</i><i class="z">0</i></div>
<div class="t m" style="left:422.04px;top:166px;font-size:10.32px;line-height:10.32px;color:#A4A4A4;transform:scaleX(0.78);">1<i class="p">.</i><i class="z">0</i><i class="z">0</i><i class="z">0</i></div>
<div class="t m" style="left:469.14px;top:166px;font-size:10.32px;line-height:10.32px;color:#000;transform:scaleX(0.78);">12<i class="z">0</i></div>
<div class="t m" style="left:516.44px;top:166px;font-size:10.32px;line-height:10.32px;color:#000;transform:scaleX(0.78);"><i class="z">0</i><i class="p">.</i><i class="z">0</i></div>
<div class="t m" style="left:581.04px;top:166px;font-size:10.32px;line-height:10.32px;color:#A4A4A4;transform:scaleX(0.78);">1<i class="p">.</i><i class="z">0</i></div>
<div class="t" style="left:320.84px;top:180px;font-size:10.23px;line-height:10.23px;font-family:'Liberation Serif',serif;color:#000;transform:scaleX(0.78);transform-origin:0 0;letter-spacing:0.3px;">Hz</div>
<div class="t m" style="left:349.34px;top:180px;font-size:10.32px;line-height:10.32px;color:#000;transform:scaleX(0.78);">5<i class="z">0</i><i class="p">.</i><i class="z">0</i><i class="z">0</i><i class="z">0</i></div>
<div class="t m" style="left:422.04px;top:180px;font-size:10.32px;line-height:10.32px;color:#A4A4A4;transform:scaleX(0.78);"><i class="z">0</i><i class="p">.</i><i class="z">0</i><i class="z">0</i><i class="z">0</i></div>
<div class="t m" style="left:469.14px;top:180px;font-size:10.32px;line-height:10.32px;color:#000;transform:scaleX(0.78);">1<i class="z">0</i><i class="z">0</i><i class="z">0</i></div>
<div style="position:absolute;left:303px;top:203.4px;width:331px;height:1px;background:#A8A496"></div>
<div style="position:absolute;left:303px;top:203.4px;width:1px;height:127.6px;background:#A8A496"></div>
<div style="position:absolute;left:304px;top:204.4px;width:329px;height:1px;background:#fff"></div>
<div style="position:absolute;left:304px;top:204.4px;width:1px;height:125.6px;background:#fff"></div>
<div style="position:absolute;left:632.8px;top:204.4px;width:1px;height:126px;background:#A8A496"></div>
<div style="position:absolute;left:633.8px;top:203.4px;width:1px;height:128.6px;background:#fff"></div>
<div style="position:absolute;left:303px;top:330px;width:330.8px;height:1px;background:#A8A496"></div>
<div style="position:absolute;left:303px;top:331px;width:331.8px;height:1px;background:#fff"></div>
<div class="t" style="left:308.53px;top:208px;font-size:10.08px;line-height:10.08px;font-family:'Liberation Serif',serif;color:#000;transform:scaleX(0.86);transform-origin:0 0;letter-spacing:0.6px;">Ux:</div>
<div style="position:absolute;left:327.8px;top:208px;width:98.4px;height:14.8px;background:#fff;border-top:1px solid #8A887C;border-left:1px solid #8A887C;border-bottom:1px solid #FFFFFF;border-right:1px solid #FFFFFF;box-shadow:inset 1px 1px 0 #A8A698,inset -1px -1px 0 #ECEAE0;box-sizing:border-box"></div>
<div class="t" style="left:330.55px;top:209px;font-size:12px;line-height:12px;color:#000;"><i class="c" style="width:9.65px">任</i><i class="c" style="width:9.65px">意</i><i class="c" style="width:9.65px">方</i><i class="c" style="width:9.65px">式</i></div>
<div style="position:absolute;left:412.6px;top:209.1px;width:12.6px;height:12.6px;background:#ECE9D8;border-left:1px solid #fff;border-top:1px solid #fff;border-right:1px solid #716F64;border-bottom:1px solid #716F64;box-sizing:border-box"></div>
<svg style="left:415.4px;top:213.4px" width="8" height="5" viewBox="0 0 8 5"><path d="M0.3 0.3 L6.6 0.3 L3.45 3.8 Z" fill="#000"/></svg>
<div class="t" style="left:436.95px;top:209px;font-size:12px;line-height:12px;color:#000;"><i class="c" style="width:9.54px">开</i><i class="c" style="width:9.54px">关</i><i class="c" style="width:9.54px">变</i><i class="c" style="width:9.54px">位</i><i class="c" style="width:9.54px">去</i><i class="c" style="width:9.54px">抖</i><i class="c" style="width:9.54px">时</i><i class="c" style="width:9.54px">间</i></div>
<div style="position:absolute;left:520px;top:208.4px;width:67px;height:15.2px;background:#fff;border-top:1px solid #8A887C;border-left:1px solid #8A887C;border-bottom:1px solid #FFFFFF;border-right:1px solid #FFFFFF;box-shadow:inset 1px 1px 0 #A8A698,inset -1px -1px 0 #ECEAE0;box-sizing:border-box"></div>
<div class="t" style="left:521.99px;top:210px;font-size:10.17px;line-height:10.17px;font-family:'Liberation Sans',sans-serif;color:#000;-webkit-text-stroke:0.2px #000;">5</div>
<div class="t m" style="left:595.3px;top:212.1px;font-size:8.1px;line-height:8.1px;font-weight:bold;transform:scaleX(1.02)">ms</div>
<div style="position:absolute;left:306px;top:235.6px;width:96px;height:1px;background:#A9A698"></div>
<div style="position:absolute;left:306px;top:235.6px;width:1px;height:89px;background:#A9A698"></div>
<div style="position:absolute;left:307px;top:236.6px;width:95px;height:1px;background:#fff"></div>
<div style="position:absolute;left:307px;top:236.6px;width:1px;height:88px;background:#fff"></div>
<div style="position:absolute;left:401px;top:235.6px;width:1px;height:89px;background:#A9A698"></div>
<div style="position:absolute;left:402px;top:235.6px;width:1px;height:90px;background:#fff"></div>
<div style="position:absolute;left:306px;top:323.6px;width:96px;height:1px;background:#A9A698"></div>
<div style="position:absolute;left:306px;top:324.6px;width:97px;height:1px;background:#fff"></div>
<div style="position:absolute;left:310px;top:232px;width:43px;height:8px;background:#ECE9D8"></div>
<div class="t" style="left:311.35px;top:230px;font-size:12px;line-height:12px;color:#000;"><i class="c" style="width:9.8px">测</i><i class="c" style="width:9.8px">试</i><i class="c" style="width:9.8px">类</i><i class="c" style="width:9.8px">型</i></div>
<div style="position:absolute;left:404.8px;top:235.6px;width:89.2px;height:1px;background:#A9A698"></div>
<div style="position:absolute;left:404.8px;top:235.6px;width:1px;height:89px;background:#A9A698"></div>
<div style="position:absolute;left:405.8px;top:236.6px;width:88.2px;height:1px;background:#fff"></div>
<div style="position:absolute;left:405.8px;top:236.6px;width:1px;height:88px;background:#fff"></div>
<div style="position:absolute;left:493px;top:235.6px;width:1px;height:89px;background:#A9A698"></div>
<div style="position:absolute;left:494px;top:235.6px;width:1px;height:90px;background:#fff"></div>
<div style="position:absolute;left:404.8px;top:323.6px;width:89.2px;height:1px;background:#A9A698"></div>
<div style="position:absolute;left:404.8px;top:324.6px;width:90.2px;height:1px;background:#fff"></div>
<div style="position:absolute;left:409.5px;top:232px;width:71px;height:8px;background:#ECE9D8"></div>
<div class="t" style="left:411.05px;top:230px;font-size:12px;line-height:12px;color:#000;"><i class="c" style="width:9.5px">开</i><i class="c" style="width:9.5px">入</i><i class="c" style="width:9.5px">量</i><i class="c" style="width:9.5px">逻</i><i class="c" style="width:9.5px">辑</i><i class="c" style="width:9.5px">类</i><i class="c" style="width:9.5px">型</i></div>
<div style="position:absolute;left:556px;top:245.6px;width:68.8px;height:1px;background:#A9A698"></div>
<div style="position:absolute;left:556px;top:245.6px;width:1px;height:36.8px;background:#A9A698"></div>
<div style="position:absolute;left:557px;top:246.6px;width:67.8px;height:1px;background:#fff"></div>
<div style="position:absolute;left:557px;top:246.6px;width:1px;height:35.8px;background:#fff"></div>
<div style="position:absolute;left:623.8px;top:245.6px;width:1px;height:36.8px;background:#A9A698"></div>
<div style="position:absolute;left:624.8px;top:245.6px;width:1px;height:37.8px;background:#fff"></div>
<div style="position:absolute;left:556px;top:281.4px;width:68.8px;height:1px;background:#A9A698"></div>
<div style="position:absolute;left:556px;top:282.4px;width:69.8px;height:1px;background:#fff"></div>
<svg style="left:318.6px;top:249.2px" width="9" height="9" viewBox="0 0 9 9"><circle cx="4.5" cy="4.5" r="4" fill="#FFFFFF" stroke="#D8D6CA" stroke-width="1"/><path d="M7.33 1.67 A4 4 0 0 0 1.67 7.33" fill="none" stroke="#5A584E" stroke-width="1.2"/></svg>
<div class="t" style="left:331.05px;top:248px;font-size:12px;line-height:12px;color:#000;"><i class="c" style="width:9.46px">测</i><i class="c" style="width:9.46px">接</i><i class="c" style="width:9.46px">点</i><i class="c" style="width:9.46px">动</i><i class="c" style="width:9.46px">作</i></div>
<svg style="left:318.4px;top:278.8px" width="9" height="9" viewBox="0 0 9 9"><circle cx="4.5" cy="4.5" r="4" fill="#FFFFFF" stroke="#D8D6CA" stroke-width="1"/><path d="M7.33 1.67 A4 4 0 0 0 1.67 7.33" fill="none" stroke="#5A584E" stroke-width="1.2"/><circle cx="4.5" cy="4.5" r="1.7" fill="#111"/></svg>
<div class="t" style="left:330.55px;top:278px;font-size:12px;line-height:12px;color:#000;"><i class="c" style="width:9.77px">测</i><i class="c" style="width:9.77px">动</i><i class="c" style="width:9.77px">作</i><i class="c" style="width:9.77px">和</i><i class="c" style="width:9.77px">返</i><i class="c" style="width:9.77px">回</i></div>
<svg style="left:413.5px;top:249.2px" width="9" height="9" viewBox="0 0 9 9"><circle cx="4.5" cy="4.5" r="4" fill="#FFFFFF" stroke="#D8D6CA" stroke-width="1"/><path d="M7.33 1.67 A4 4 0 0 0 1.67 7.33" fill="none" stroke="#5A584E" stroke-width="1.2"/></svg>
<div class="t" style="left:426.05px;top:248px;font-size:12px;line-height:12px;color:#000;"><i class="c" style="width:9.7px">逻</i><i class="c" style="width:9.7px">辑</i><i class="c" style="width:9.7px">与</i></div>
<svg style="left:414.2px;top:278.8px" width="9" height="9" viewBox="0 0 9 9"><circle cx="4.5" cy="4.5" r="4" fill="#FFFFFF" stroke="#D8D6CA" stroke-width="1"/><path d="M7.33 1.67 A4 4 0 0 0 1.67 7.33" fill="none" stroke="#5A584E" stroke-width="1.2"/><circle cx="4.5" cy="4.5" r="1.7" fill="#111"/></svg>
<div class="t" style="left:426.25px;top:278px;font-size:12px;line-height:12px;color:#000;"><i class="c" style="width:9.77px">逻</i><i class="c" style="width:9.77px">辑</i><i class="c" style="width:9.77px">或</i></div>
<svg style="left:506.6px;top:247.6px" width="9" height="9" viewBox="0 0 9 9"><circle cx="4.5" cy="4.5" r="4" fill="#FFFFFF" stroke="#D8D6CA" stroke-width="1"/><path d="M7.33 1.67 A4 4 0 0 0 1.67 7.33" fill="none" stroke="#5A584E" stroke-width="1.2"/><circle cx="4.5" cy="4.5" r="1.7" fill="#111"/></svg>
<div class="t" style="left:519.15px;top:247px;font-size:12px;line-height:12px;color:#000;"><i class="c" style="width:9.45px">手</i><i class="c" style="width:9.45px">动</i></div>
<svg style="left:506.6px;top:264px" width="9" height="9" viewBox="0 0 9 9"><circle cx="4.5" cy="4.5" r="4" fill="#FFFFFF" stroke="#D8D6CA" stroke-width="1"/><path d="M7.33 1.67 A4 4 0 0 0 1.67 7.33" fill="none" stroke="#5A584E" stroke-width="1.2"/></svg>
<div class="t" style="left:519.15px;top:263px;font-size:12px;line-height:12px;color:#000;"><i class="c" style="width:9.47px">全</i><i class="c" style="width:9.47px">自</i><i class="c" style="width:9.47px">动</i></div>
<svg style="left:506.6px;top:279.8px" width="9" height="9" viewBox="0 0 9 9"><circle cx="4.5" cy="4.5" r="4" fill="#FFFFFF" stroke="#D8D6CA" stroke-width="1"/><path d="M7.33 1.67 A4 4 0 0 0 1.67 7.33" fill="none" stroke="#5A584E" stroke-width="1.2"/></svg>
<div class="t" style="left:519.15px;top:279px;font-size:12px;line-height:12px;color:#000;"><i class="c" style="width:9.47px">半</i><i class="c" style="width:9.47px">自</i><i class="c" style="width:9.47px">动</i></div>
<svg style="left:565.8px;top:251.6px" width="9" height="9" viewBox="0 0 9 9"><circle cx="4.5" cy="4.5" r="4" fill="#FFFFFF" stroke="#D8D6CA" stroke-width="1"/><path d="M7.33 1.67 A4 4 0 0 0 1.67 7.33" fill="none" stroke="#5A584E" stroke-width="1.2"/><circle cx="4.5" cy="4.5" r="1.7" fill="#111"/></svg>
<div class="t" style="left:578.15px;top:251px;font-size:12px;line-height:12px;color:#000;"><i class="c" style="width:9.7px">递</i><i class="c" style="width:9.7px">增</i></div>
<svg style="left:565.8px;top:268.6px" width="9" height="9" viewBox="0 0 9 9"><circle cx="4.5" cy="4.5" r="4" fill="#FFFFFF" stroke="#D8D6CA" stroke-width="1"/><path d="M7.33 1.67 A4 4 0 0 0 1.67 7.33" fill="none" stroke="#5A584E" stroke-width="1.2"/></svg>
<div class="t" style="left:578.15px;top:268px;font-size:12px;line-height:12px;color:#000;"><i class="c" style="width:9.7px">递</i><i class="c" style="width:9.7px">减</i></div>
<div class="t" style="left:503.55px;top:304px;font-size:12px;line-height:12px;color:#000;"><i class="c" style="width:9.5px">间</i><i class="c" style="width:9.5px">隔</i><i class="c" style="width:9.5px">时</i><i class="c" style="width:9.5px">间</i></div>
<div style="position:absolute;left:550.6px;top:304px;width:45.8px;height:15.8px;background:#fff;border-top:1px solid #8A887C;border-left:1px solid #8A887C;border-bottom:1px solid #FFFFFF;border-right:1px solid #FFFFFF;box-shadow:inset 1px 1px 0 #A8A698,inset -1px -1px 0 #ECEAE0;box-sizing:border-box"></div>
<div class="t" style="left:552.88px;top:307px;font-size:9.45px;line-height:9.45px;font-family:'Liberation Sans',sans-serif;color:#000;transform:scaleX(0.95);transform-origin:0 0;letter-spacing:-0.15px;-webkit-text-stroke:0.3px #000;">1000</div>
<div class="t m" style="left:602.6px;top:310.8px;font-size:8.1px;line-height:8.1px;font-weight:bold;transform:scaleX(1.02)">ms</div>
<div style="position:absolute;left:11.4px;top:340.6px;width:293.5px;height:118px;background:#FCE4FC"></div>
<div style="position:absolute;left:11.4px;top:340.6px;width:293.5px;height:1.1px;background:#8E8C80"></div>
<div style="position:absolute;left:11.4px;top:340.6px;width:1.2px;height:118px;background:#8E8C80"></div>
<div style="position:absolute;left:12.6px;top:341.7px;width:0.9px;height:116.9px;background:#F4F2E8"></div>
<div style="position:absolute;left:11.4px;top:458.6px;width:294.5px;height:1.2px;background:#F8F6EE"></div>
<div style="position:absolute;left:304.9px;top:340.6px;width:1.2px;height:119px;background:#F8F6EE"></div>
<div style="position:absolute;left:13.5px;top:341.7px;width:291.4px;height:11.9px;background:#ECE9D8"></div>
<div style="position:absolute;left:13.5px;top:341.7px;width:291.4px;height:0.9px;background:#fff"></div>
<div style="position:absolute;left:13.5px;top:352.8px;width:291.4px;height:1.4px;background:#8E8C80"></div>
<div style="position:absolute;left:30.7px;top:341.7px;width:1.2px;height:11.1px;background:#8E8C80"></div>
<div style="position:absolute;left:31.9px;top:342.6px;width:0.9px;height:10.2px;background:#fff"></div>
<div style="position:absolute;left:79.9px;top:341.7px;width:1.2px;height:11.1px;background:#8E8C80"></div>
<div style="position:absolute;left:81.1px;top:342.6px;width:0.9px;height:10.2px;background:#fff"></div>
<div style="position:absolute;left:143.4px;top:341.7px;width:1.2px;height:11.1px;background:#8E8C80"></div>
<div style="position:absolute;left:144.6px;top:342.6px;width:0.9px;height:10.2px;background:#fff"></div>
<div style="position:absolute;left:207.5px;top:341.7px;width:1.2px;height:11.1px;background:#8E8C80"></div>
<div style="position:absolute;left:208.7px;top:342.6px;width:0.9px;height:10.2px;background:#fff"></div>
<div style="position:absolute;left:279.4px;top:341.7px;width:1.2px;height:11.1px;background:#8E8C80"></div>
<div style="position:absolute;left:280.6px;top:342.6px;width:0.9px;height:10.2px;background:#fff"></div>
<div class="t" style="left:35.55px;top:343px;font-size:12px;line-height:12px;color:#000;"><i class="c" style="width:9.6px">参</i><i class="c" style="width:9.6px">量</i></div>
<div class="t" style="left:84.55px;top:343px;font-size:12px;line-height:12px;color:#000;"><i class="c" style="width:9.6px">动</i><i class="c" style="width:9.6px">作</i></div>
<div class="t" style="left:148.55px;top:343px;font-size:12px;line-height:12px;color:#000;"><i class="c" style="width:9.6px">返</i><i class="c" style="width:9.6px">回</i></div>
<div class="t" style="left:212.55px;top:343px;font-size:12px;line-height:12px;color:#000;"><i class="c" style="width:9.6px">返</i><i class="c" style="width:9.6px">回</i><i class="c" style="width:9.6px">系</i><i class="c" style="width:9.6px">数</i></div>
<div style="position:absolute;left:12.8px;top:369.4px;width:279.2px;height:1px;background:#F2DDE8"></div>
<div style="position:absolute;left:12.8px;top:383.12px;width:279.2px;height:1px;background:#F2DDE8"></div>
<div style="position:absolute;left:12.8px;top:396.84px;width:279.2px;height:1px;background:#F2DDE8"></div>
<div style="position:absolute;left:12.8px;top:410.56px;width:279.2px;height:1px;background:#F2DDE8"></div>
<div style="position:absolute;left:12.8px;top:424.28px;width:279.2px;height:1px;background:#F2DDE8"></div>
<div style="position:absolute;left:12.8px;top:438px;width:279.2px;height:1px;background:#F2DDE8"></div>
<div style="position:absolute;left:12.8px;top:451.72px;width:279.2px;height:1px;background:#F2DDE8"></div>
<div style="position:absolute;left:32.8px;top:354.4px;width:1px;height:104px;background:#F2DDE8"></div>
<div style="position:absolute;left:80.6px;top:354.4px;width:1px;height:104px;background:#F2DDE8"></div>
<div style="position:absolute;left:144.2px;top:354.4px;width:1px;height:104px;background:#F2DDE8"></div>
<div style="position:absolute;left:208.2px;top:354.4px;width:1px;height:104px;background:#F2DDE8"></div>
<div style="position:absolute;left:280.2px;top:354.4px;width:1px;height:104px;background:#F2DDE8"></div>
<svg style="left:16.1px;top:357.9px" width="11" height="11" viewBox="0 0 11 11"><rect x="0.75" y="0.75" width="8.6" height="8.6" fill="#fff" stroke="#000" stroke-width="1.5"/></svg>
<div class="t" style="left:37.45px;top:358px;font-size:10.23px;line-height:10.23px;font-family:'Liberation Serif',serif;color:#000;transform:scaleX(0.72);transform-origin:0 0;letter-spacing:0.2px;">UA</div>
<svg style="left:16.1px;top:371.62px" width="11" height="11" viewBox="0 0 11 11"><rect x="0.75" y="0.75" width="8.6" height="8.6" fill="#fff" stroke="#000" stroke-width="1.5"/></svg>
<div class="t" style="left:37.45px;top:372px;font-size:10.23px;line-height:10.23px;font-family:'Liberation Serif',serif;color:#000;transform:scaleX(0.72);transform-origin:0 0;letter-spacing:0.2px;">UB</div>
<svg style="left:16.1px;top:385.34px" width="11" height="11" viewBox="0 0 11 11"><rect x="0.75" y="0.75" width="8.6" height="8.6" fill="#fff" stroke="#000" stroke-width="1.5"/></svg>
<div class="t" style="left:37.45px;top:385px;font-size:10.23px;line-height:10.23px;font-family:'Liberation Serif',serif;color:#000;transform:scaleX(0.72);transform-origin:0 0;letter-spacing:0.2px;">UC</div>
<svg style="left:16.1px;top:399.06px" width="11" height="11" viewBox="0 0 11 11"><rect x="0.75" y="0.75" width="8.6" height="8.6" fill="#fff" stroke="#000" stroke-width="1.5"/><path d="M2.4 4.9 L4.3 6.9 L7.8 2.8" fill="none" stroke="#000" stroke-width="1.4"/></svg>
<div class="t" style="left:37.19px;top:399px;font-size:10.23px;line-height:10.23px;font-family:'Liberation Serif',serif;color:#000;transform:scaleX(0.72);transform-origin:0 0;letter-spacing:0.2px;"><i class="mi">I</i>A</div>
<svg style="left:16.1px;top:412.78px" width="11" height="11" viewBox="0 0 11 11"><rect x="0.75" y="0.75" width="8.6" height="8.6" fill="#fff" stroke="#000" stroke-width="1.5"/><path d="M2.4 4.9 L4.3 6.9 L7.8 2.8" fill="none" stroke="#000" stroke-width="1.4"/></svg>
<div class="t" style="left:37.19px;top:413px;font-size:10.23px;line-height:10.23px;font-family:'Liberation Serif',serif;color:#000;transform:scaleX(0.72);transform-origin:0 0;letter-spacing:0.2px;"><i class="mi">I</i>B</div>
<svg style="left:16.1px;top:426.5px" width="11" height="11" viewBox="0 0 11 11"><rect x="0.75" y="0.75" width="8.6" height="8.6" fill="#fff" stroke="#000" stroke-width="1.5"/><path d="M2.4 4.9 L4.3 6.9 L7.8 2.8" fill="none" stroke="#000" stroke-width="1.4"/></svg>
<div class="t" style="left:37.19px;top:426px;font-size:10.23px;line-height:10.23px;font-family:'Liberation Serif',serif;color:#000;transform:scaleX(0.72);transform-origin:0 0;letter-spacing:0.2px;"><i class="mi">I</i>C</div>
<svg style="left:16.1px;top:440.22px" width="11" height="11" viewBox="0 0 11 11"><rect x="0.75" y="0.75" width="8.6" height="8.6" fill="#fff" stroke="#000" stroke-width="1.5"/></svg>
<div class="t" style="left:37.45px;top:440px;font-size:10.23px;line-height:10.23px;font-family:'Liberation Serif',serif;color:#000;transform:scaleX(0.72);transform-origin:0 0;letter-spacing:0.2px;">Ux</div>
<svg style="left:16.1px;top:453.94px" width="11" height="11" viewBox="0 0 11 11"><rect x="0.75" y="0.75" width="8.6" height="8.6" fill="#fff" stroke="#000" stroke-width="1.5"/></svg>
<div class="t" style="left:37.45px;top:454px;font-size:10.23px;line-height:10.23px;font-family:'Liberation Serif',serif;color:#000;transform:scaleX(0.72);transform-origin:0 0;letter-spacing:0.2px;">UAB</div>
<div style="position:absolute;left:11.6px;top:458.4px;width:296px;height:1.2px;background:#fff"></div>
<div style="position:absolute;left:291.9px;top:341.8px;width:13px;height:116.8px;background:#FAFAF6"></div>
<div style="position:absolute;left:292.3px;top:343.3px;width:12.4px;height:11.2px;background:linear-gradient(135deg,#DDE8FE,#B6CAF6);border:1px solid #B0C4EE;border-radius:2px;box-sizing:border-box"></div>
<svg style="left:292.3px;top:343.3px" width="12" height="11" viewBox="0 0 12 11"><path d="M3 6.8 L6.2 3.6 L9.4 6.8" fill="none" stroke="#4D6185" stroke-width="1.6"/></svg>
<div style="position:absolute;left:292.3px;top:445.6px;width:12.4px;height:11.2px;background:linear-gradient(135deg,#DDE8FE,#B6CAF6);border:1px solid #B0C4EE;border-radius:2px;box-sizing:border-box"></div>
<svg style="left:292.3px;top:445.6px" width="12" height="11" viewBox="0 0 12 11"><path d="M3 3.8 L6.2 7 L9.4 3.8" fill="none" stroke="#4D6185" stroke-width="1.6"/></svg>
<div style="position:absolute;left:292.5px;top:355.8px;width:12px;height:18px;background:linear-gradient(90deg,#D2DEFC,#BED0F8);border:1px solid #AABCEA;border-radius:2px;box-sizing:border-box"></div>
<div style="position:absolute;left:296px;top:361.5px;width:5px;height:1px;background:#EEF3FE"></div>
<div style="position:absolute;left:296px;top:363.5px;width:5px;height:1px;background:#EEF3FE"></div>
<div style="position:absolute;left:296px;top:365.5px;width:5px;height:1px;background:#EEF3FE"></div>
<div style="position:absolute;left:296px;top:367.5px;width:5px;height:1px;background:#EEF3FE"></div>
<div style="position:absolute;left:310.9px;top:340.8px;width:173.8px;height:117.5px;background:#FCE4FC"></div>
<div style="position:absolute;left:310.9px;top:340.8px;width:173.8px;height:1.1px;background:#8E8C80"></div>
<div style="position:absolute;left:310.9px;top:340.8px;width:1.2px;height:117.5px;background:#8E8C80"></div>
<div style="position:absolute;left:312.1px;top:341.9px;width:0.9px;height:116.4px;background:#F4F2E8"></div>
<div style="position:absolute;left:310.9px;top:458.3px;width:174.8px;height:1.2px;background:#F8F6EE"></div>
<div style="position:absolute;left:484.7px;top:340.8px;width:1.2px;height:118.5px;background:#F8F6EE"></div>
<div style="position:absolute;left:313px;top:341.9px;width:171.7px;height:11.9px;background:#ECE9D8"></div>
<div style="position:absolute;left:313px;top:341.9px;width:171.7px;height:0.9px;background:#fff"></div>
<div style="position:absolute;left:313px;top:353px;width:171.7px;height:1.4px;background:#8E8C80"></div>
<div style="position:absolute;left:350.5px;top:341.9px;width:1.2px;height:11.1px;background:#8E8C80"></div>
<div style="position:absolute;left:351.7px;top:342.8px;width:0.9px;height:10.2px;background:#fff"></div>
<div style="position:absolute;left:415.1px;top:341.9px;width:1.2px;height:11.1px;background:#8E8C80"></div>
<div style="position:absolute;left:416.3px;top:342.8px;width:0.9px;height:10.2px;background:#fff"></div>
<div style="position:absolute;left:478.9px;top:341.9px;width:1.2px;height:11.1px;background:#8E8C80"></div>
<div style="position:absolute;left:480.1px;top:342.8px;width:0.9px;height:10.2px;background:#fff"></div>
<div class="t" style="left:316.05px;top:343px;font-size:12px;line-height:12px;color:#000;"><i class="c" style="width:9.5px">开</i><i class="c" style="width:9.5px">入</i><i class="c" style="width:9.5px">量</i></div>
<div class="t" style="left:355.55px;top:343px;font-size:12px;line-height:12px;color:#000;"><i class="c" style="width:9.5px">动</i><i class="c" style="width:9.5px">作</i><i class="c" style="width:9.5px">时</i><i class="c" style="width:9.5px">间</i></div>
<div class="t" style="left:420.05px;top:343px;font-size:12px;line-height:12px;color:#000;"><i class="c" style="width:9.5px">返</i><i class="c" style="width:9.5px">回</i><i class="c" style="width:9.5px">时</i><i class="c" style="width:9.5px">间</i></div>
<div style="position:absolute;left:312.1px;top:369.6px;width:172.6px;height:1px;background:#F2DDE8"></div>
<div style="position:absolute;left:312.1px;top:383.32px;width:172.6px;height:1px;background:#F2DDE8"></div>
<div style="position:absolute;left:312.1px;top:397.04px;width:172.6px;height:1px;background:#F2DDE8"></div>
<div style="position:absolute;left:312.1px;top:410.76px;width:172.6px;height:1px;background:#F2DDE8"></div>
<div style="position:absolute;left:312.1px;top:424.48px;width:172.6px;height:1px;background:#F2DDE8"></div>
<div style="position:absolute;left:312.1px;top:438.2px;width:172.6px;height:1px;background:#F2DDE8"></div>
<div style="position:absolute;left:312.1px;top:451.92px;width:172.6px;height:1px;background:#F2DDE8"></div>
<div style="position:absolute;left:351.4px;top:354.4px;width:1px;height:104px;background:#F2DDE8"></div>
<div style="position:absolute;left:416px;top:354.4px;width:1px;height:104px;background:#F2DDE8"></div>
<div style="position:absolute;left:480px;top:354.4px;width:1px;height:104px;background:#F2DDE8"></div>
<svg style="left:315.4px;top:358.3px" width="11" height="11" viewBox="0 0 11 11"><rect x="0.75" y="0.75" width="8.6" height="8.6" fill="#fff" stroke="#000" stroke-width="1.5"/><path d="M2.4 4.9 L4.3 6.9 L7.8 2.8" fill="none" stroke="#000" stroke-width="1.4"/></svg>
<div class="t" style="left:327.64px;top:358px;font-size:10.08px;line-height:10.08px;font-family:'Liberation Serif',serif;color:#000;transform:scaleX(0.8);transform-origin:0 0;letter-spacing:0px;">A</div>
<svg style="left:315.4px;top:372.02px" width="11" height="11" viewBox="0 0 11 11"><rect x="0.75" y="0.75" width="8.6" height="8.6" fill="#fff" stroke="#000" stroke-width="1.5"/><path d="M2.4 4.9 L4.3 6.9 L7.8 2.8" fill="none" stroke="#000" stroke-width="1.4"/></svg>
<div class="t" style="left:327.64px;top:372px;font-size:10.08px;line-height:10.08px;font-family:'Liberation Serif',serif;color:#000;transform:scaleX(0.8);transform-origin:0 0;letter-spacing:0px;">B</div>
<svg style="left:315.4px;top:385.74px" width="11" height="11" viewBox="0 0 11 11"><rect x="0.75" y="0.75" width="8.6" height="8.6" fill="#fff" stroke="#000" stroke-width="1.5"/><path d="M2.4 4.9 L4.3 6.9 L7.8 2.8" fill="none" stroke="#000" stroke-width="1.4"/></svg>
<div class="t" style="left:327.64px;top:386px;font-size:10.08px;line-height:10.08px;font-family:'Liberation Serif',serif;color:#000;transform:scaleX(0.8);transform-origin:0 0;letter-spacing:0px;">C</div>
<svg style="left:315.4px;top:399.46px" width="11" height="11" viewBox="0 0 11 11"><rect x="0.75" y="0.75" width="8.6" height="8.6" fill="#fff" stroke="#000" stroke-width="1.5"/><path d="M2.4 4.9 L4.3 6.9 L7.8 2.8" fill="none" stroke="#000" stroke-width="1.4"/></svg>
<div class="t" style="left:327.64px;top:399px;font-size:10.08px;line-height:10.08px;font-family:'Liberation Serif',serif;color:#000;transform:scaleX(0.8);transform-origin:0 0;letter-spacing:0px;">R</div>
<svg style="left:315.4px;top:413.18px" width="11" height="11" viewBox="0 0 11 11"><rect x="0.75" y="0.75" width="8.6" height="8.6" fill="#fff" stroke="#000" stroke-width="1.5"/><path d="M2.4 4.9 L4.3 6.9 L7.8 2.8" fill="none" stroke="#000" stroke-width="1.4"/></svg>
<div class="t" style="left:327.64px;top:413px;font-size:10.08px;line-height:10.08px;font-family:'Liberation Serif',serif;color:#000;transform:scaleX(0.8);transform-origin:0 0;letter-spacing:0px;">a</div>
<svg style="left:315.4px;top:426.9px" width="11" height="11" viewBox="0 0 11 11"><rect x="0.75" y="0.75" width="8.6" height="8.6" fill="#fff" stroke="#000" stroke-width="1.5"/><path d="M2.4 4.9 L4.3 6.9 L7.8 2.8" fill="none" stroke="#000" stroke-width="1.4"/></svg>
<div class="t" style="left:327.64px;top:427px;font-size:10.08px;line-height:10.08px;font-family:'Liberation Serif',serif;color:#000;transform:scaleX(0.8);transform-origin:0 0;letter-spacing:0px;">b</div>
<svg style="left:315.4px;top:440.62px" width="11" height="11" viewBox="0 0 11 11"><rect x="0.75" y="0.75" width="8.6" height="8.6" fill="#fff" stroke="#000" stroke-width="1.5"/><path d="M2.4 4.9 L4.3 6.9 L7.8 2.8" fill="none" stroke="#000" stroke-width="1.4"/></svg>
<div class="t" style="left:327.64px;top:440px;font-size:10.08px;line-height:10.08px;font-family:'Liberation Serif',serif;color:#000;transform:scaleX(0.8);transform-origin:0 0;letter-spacing:0px;">c</div>
<div style="position:absolute;left:489.2px;top:341px;width:144.5px;height:117.2px;background:#CCFFFF"></div>
<div style="position:absolute;left:489.2px;top:341px;width:144.5px;height:1.1px;background:#8E8C80"></div>
<div style="position:absolute;left:489.2px;top:341px;width:1.2px;height:117.2px;background:#8E8C80"></div>
<div style="position:absolute;left:490.4px;top:342.1px;width:0.9px;height:116.1px;background:#F4F2E8"></div>
<div style="position:absolute;left:489.2px;top:458.2px;width:145.5px;height:1.2px;background:#F8F6EE"></div>
<div style="position:absolute;left:633.7px;top:341px;width:1.2px;height:118.2px;background:#F8F6EE"></div>
<div style="position:absolute;left:491.3px;top:342.1px;width:142.4px;height:11.9px;background:#ECE9D8"></div>
<div style="position:absolute;left:491.3px;top:342.1px;width:142.4px;height:0.9px;background:#fff"></div>
<div style="position:absolute;left:491.3px;top:353.2px;width:142.4px;height:1.4px;background:#8E8C80"></div>
<div style="position:absolute;left:528.9px;top:342.1px;width:1.2px;height:11.1px;background:#8E8C80"></div>
<div style="position:absolute;left:530.1px;top:343px;width:0.9px;height:10.2px;background:#fff"></div>
<div style="position:absolute;left:577.3px;top:342.1px;width:1.2px;height:11.1px;background:#8E8C80"></div>
<div style="position:absolute;left:578.5px;top:343px;width:0.9px;height:10.2px;background:#fff"></div>
<div style="position:absolute;left:625.3px;top:342.1px;width:1.2px;height:11.1px;background:#8E8C80"></div>
<div style="position:absolute;left:626.5px;top:343px;width:0.9px;height:10.2px;background:#fff"></div>
<div class="t" style="left:494.25px;top:342px;font-size:12px;line-height:12px;color:#000;"><i class="c" style="width:9.6px">参</i><i class="c" style="width:9.6px">量</i></div>
<div class="t" style="left:534.25px;top:342px;font-size:12px;line-height:12px;color:#000;"><i class="c" style="width:9.6px">幅</i><i class="c" style="width:9.6px">值</i></div>
<div class="t" style="left:582.25px;top:342px;font-size:12px;line-height:12px;color:#000;"><i class="c" style="width:9.6px">相</i><i class="c" style="width:9.6px">位</i></div>
<div style="position:absolute;left:490.4px;top:366.6px;width:143.3px;height:1px;background:#E2F0EE"></div>
<div style="position:absolute;left:490.4px;top:376.9px;width:143.3px;height:1px;background:#E2F0EE"></div>
<div style="position:absolute;left:490.4px;top:387.2px;width:143.3px;height:1px;background:#E2F0EE"></div>
<div style="position:absolute;left:490.4px;top:397.5px;width:143.3px;height:1px;background:#E2F0EE"></div>
<div style="position:absolute;left:490.4px;top:407.8px;width:143.3px;height:1px;background:#E2F0EE"></div>
<div style="position:absolute;left:490.4px;top:418.1px;width:143.3px;height:1px;background:#E2F0EE"></div>
<div style="position:absolute;left:490.4px;top:428.4px;width:143.3px;height:1px;background:#E2F0EE"></div>
<div style="position:absolute;left:490.4px;top:438.7px;width:143.3px;height:1px;background:#E2F0EE"></div>
<div style="position:absolute;left:490.4px;top:449px;width:143.3px;height:1px;background:#E2F0EE"></div>
<div style="position:absolute;left:530px;top:354.4px;width:1px;height:104px;background:#E2F0EE"></div>
<div style="position:absolute;left:578.4px;top:354.4px;width:1px;height:104px;background:#E2F0EE"></div>
<div style="position:absolute;left:626.4px;top:354.4px;width:1px;height:104px;background:#E2F0EE"></div>
<div class="t" style="left:493.85px;top:358px;font-size:9.47px;line-height:9.47px;font-family:'Liberation Serif',serif;color:#000;transform:scaleX(0.78);transform-origin:0 0;letter-spacing:0.15px;">UAB</div>
<div class="t m" style="left:535.42px;top:358px;font-size:9.41px;line-height:9.41px;color:#000;transform:scaleX(0.88);">17<i class="p">.</i>321</div>
<div class="t m" style="left:582.12px;top:358px;font-size:9.41px;line-height:9.41px;color:#000;transform:scaleX(0.88);">3<i class="z">0</i><i class="p">.</i><i class="z">0</i></div>
<div class="t" style="left:493.85px;top:368px;font-size:9.47px;line-height:9.47px;font-family:'Liberation Serif',serif;color:#000;transform:scaleX(0.78);transform-origin:0 0;letter-spacing:0.15px;">UBC</div>
<div class="t m" style="left:535.42px;top:368px;font-size:9.41px;line-height:9.41px;color:#000;transform:scaleX(0.88);">17<i class="p">.</i>321</div>
<div class="t m" style="left:582.12px;top:368px;font-size:9.41px;line-height:9.41px;color:#000;transform:scaleX(0.88);">-9<i class="z">0</i><i class="p">.</i><i class="z">0</i></div>
<div class="t" style="left:493.85px;top:378px;font-size:9.47px;line-height:9.47px;font-family:'Liberation Serif',serif;color:#000;transform:scaleX(0.78);transform-origin:0 0;letter-spacing:0.15px;">UCA</div>
<div class="t m" style="left:535.42px;top:378px;font-size:9.41px;line-height:9.41px;color:#000;transform:scaleX(0.88);">17<i class="p">.</i>321</div>
<div class="t m" style="left:582.12px;top:378px;font-size:9.41px;line-height:9.41px;color:#000;transform:scaleX(0.88);">15<i class="z">0</i><i class="p">.</i><i class="z">0</i></div>
<div class="t" style="left:493.85px;top:389px;font-size:9.47px;line-height:9.47px;font-family:'Liberation Serif',serif;color:#000;transform:scaleX(0.78);transform-origin:0 0;letter-spacing:0.15px;">Uo</div>
<div class="t m" style="left:535.42px;top:389px;font-size:9.41px;line-height:9.41px;color:#000;transform:scaleX(0.88);"><i class="z">0</i><i class="p">.</i><i class="z">0</i><i class="z">0</i><i class="z">0</i></div>
<div class="t m" style="left:582.12px;top:389px;font-size:9.41px;line-height:9.41px;color:#000;transform:scaleX(0.88);">-6<i class="z">0</i><i class="p">.</i><i class="z">0</i></div>
<div class="t" style="left:493.85px;top:398px;font-size:9.47px;line-height:9.47px;font-family:'Liberation Serif',serif;color:#000;transform:scaleX(0.78);transform-origin:0 0;letter-spacing:0.15px;">U+</div>
<div class="t m" style="left:535.42px;top:398px;font-size:9.41px;line-height:9.41px;color:#000;transform:scaleX(0.88);">1<i class="z">0</i><i class="p">.</i><i class="z">0</i><i class="z">0</i><i class="z">0</i></div>
<div class="t m" style="left:582.12px;top:398px;font-size:9.41px;line-height:9.41px;color:#000;transform:scaleX(0.88);"><i class="z">0</i><i class="p">.</i><i class="z">0</i></div>
<div class="t" style="left:493.85px;top:409px;font-size:9.47px;line-height:9.47px;font-family:'Liberation Serif',serif;color:#000;transform:scaleX(0.78);transform-origin:0 0;letter-spacing:0.15px;">U-</div>
<div class="t m" style="left:535.42px;top:409px;font-size:9.41px;line-height:9.41px;color:#000;transform:scaleX(0.88);"><i class="z">0</i><i class="p">.</i><i class="z">0</i><i class="z">0</i><i class="z">0</i></div>
<div class="t m" style="left:582.12px;top:409px;font-size:9.41px;line-height:9.41px;color:#000;transform:scaleX(0.88);">-6<i class="z">0</i><i class="p">.</i><i class="z">0</i></div>
<div class="t" style="left:493.59px;top:420px;font-size:9.47px;line-height:9.47px;font-family:'Liberation Serif',serif;color:#000;transform:scaleX(0.78);transform-origin:0 0;letter-spacing:0.15px;"><i class="mi">I</i>o</div>
<div class="t m" style="left:535.42px;top:420px;font-size:9.41px;line-height:9.41px;color:#000;transform:scaleX(0.88);">1<i class="p">.</i>333</div>
<div class="t m" style="left:582.12px;top:420px;font-size:9.41px;line-height:9.41px;color:#000;transform:scaleX(0.88);">-<i class="z">0</i><i class="p">.</i><i class="z">0</i></div>
<div class="t" style="left:493.59px;top:430px;font-size:9.47px;line-height:9.47px;font-family:'Liberation Serif',serif;color:#000;transform:scaleX(0.78);transform-origin:0 0;letter-spacing:0.15px;"><i class="mi">I</i>+</div>
<div class="t m" style="left:535.42px;top:430px;font-size:9.41px;line-height:9.41px;color:#000;transform:scaleX(0.88);">2<i class="p">.</i>333</div>
<div class="t m" style="left:582.12px;top:430px;font-size:9.41px;line-height:9.41px;color:#000;transform:scaleX(0.88);"><i class="z">0</i><i class="p">.</i><i class="z">0</i></div>
<div class="t" style="left:493.59px;top:440px;font-size:9.47px;line-height:9.47px;font-family:'Liberation Serif',serif;color:#000;transform:scaleX(0.78);transform-origin:0 0;letter-spacing:0.15px;"><i class="mi">I</i>-</div>
<div class="t m" style="left:535.42px;top:440px;font-size:9.41px;line-height:9.41px;color:#000;transform:scaleX(0.88);">1<i class="p">.</i>333</div>
<div class="t m" style="left:582.12px;top:440px;font-size:9.41px;line-height:9.41px;color:#000;transform:scaleX(0.88);">-<i class="z">0</i><i class="p">.</i><i class="z">0</i></div>
<div style="position:absolute;left:7px;top:459.6px;width:635px;height:4.6px;background:#ECE9D8"></div>
<div style="position:absolute;left:7px;top:464.2px;width:635px;height:1px;background:#fff"></div>
<div class="t" style="left:7.75px;top:468px;font-size:12px;line-height:12px;color:#000;"><i class="c" style="width:9.5px">就</i><i class="c" style="width:9.5px">绪</i></div>
<div style="position:absolute;left:253.5px;top:467px;width:80.1px;height:12.6px;border-left:1px solid #ACA899;border-top:1px solid #ACA899;border-right:1px solid #fff;border-bottom:1px solid #fff;box-sizing:border-box"></div>
<div style="position:absolute;left:335.4px;top:467px;width:197px;height:12.6px;border-left:1px solid #ACA899;border-top:1px solid #ACA899;border-right:1px solid #fff;border-bottom:1px solid #fff;box-sizing:border-box"></div>
<div class="t" style="left:254.85px;top:468px;font-size:12px;line-height:12px;color:#000;"><i class="c" style="width:9.1px">运</i><i class="c" style="width:9.1px">行</i><i class="c" style="width:9.1px">时</i><i class="c" style="width:9.1px">间</i></div>
<div class="t m" style="left:292.78px;top:471px;font-size:7.59px;line-height:7.59px;color:#000;transform:scaleX(0.8);">:</div>
<div class="t m" style="left:302.28px;top:470px;font-size:9.1px;line-height:9.1px;color:#000;transform:scaleX(0.82);"><i class="z">0</i><i class="p">.</i><i class="z">0</i><i class="z">0</i>s</div>
<div class="t" style="left:336.05px;top:468px;font-size:12px;line-height:12px;color:#000;"><i class="c" style="width:9.4px">开</i><i class="c" style="width:9.4px">关</i><i class="c" style="width:9.4px">量</i></div>
<div class="t m" style="left:365.38px;top:471px;font-size:7.59px;line-height:7.59px;color:#000;transform:scaleX(0.8);">:</div>
<div class="t" style="left:370.34px;top:468px;font-size:9.62px;line-height:9.62px;font-family:'Liberation Serif',serif;color:#000;transform:scaleX(0.84);transform-origin:0 0;letter-spacing:0px;-webkit-text-stroke:0.15px #000;">A</div>
<div style="position:absolute;left:376.4px;top:468.6px;width:8.4px;height:8.4px;border-radius:50%;background:#767676"></div>
<div class="t" style="left:389.34px;top:468px;font-size:9.62px;line-height:9.62px;font-family:'Liberation Serif',serif;color:#000;transform:scaleX(0.84);transform-origin:0 0;letter-spacing:0px;-webkit-text-stroke:0.15px #000;">B</div>
<div style="position:absolute;left:395.8px;top:468.6px;width:8.4px;height:8.4px;border-radius:50%;background:#767676"></div>
<div class="t" style="left:407.84px;top:468px;font-size:9.62px;line-height:9.62px;font-family:'Liberation Serif',serif;color:#000;transform:scaleX(0.84);transform-origin:0 0;letter-spacing:0px;-webkit-text-stroke:0.15px #000;">C</div>
<div style="position:absolute;left:414.2px;top:468.6px;width:8.4px;height:8.4px;border-radius:50%;background:#767676"></div>
<div class="t" style="left:427.64px;top:468px;font-size:9.62px;line-height:9.62px;font-family:'Liberation Serif',serif;color:#000;transform:scaleX(0.84);transform-origin:0 0;letter-spacing:0px;-webkit-text-stroke:0.15px #000;">R</div>
<div style="position:absolute;left:433.9px;top:468.6px;width:8.4px;height:8.4px;border-radius:50%;background:#767676"></div>
<div class="t" style="left:447.64px;top:468px;font-size:9.62px;line-height:9.62px;font-family:'Liberation Serif',serif;color:#000;transform:scaleX(0.84);transform-origin:0 0;letter-spacing:0px;-webkit-text-stroke:0.15px #000;">a</div>
<div style="position:absolute;left:453.3px;top:468.6px;width:8.4px;height:8.4px;border-radius:50%;background:#767676"></div>
<div class="t" style="left:466.24px;top:468px;font-size:9.62px;line-height:9.62px;font-family:'Liberation Serif',serif;color:#000;transform:scaleX(0.84);transform-origin:0 0;letter-spacing:0px;-webkit-text-stroke:0.15px #000;">b</div>
<div style="position:absolute;left:471.9px;top:468.6px;width:8.4px;height:8.4px;border-radius:50%;background:#767676"></div>
<div class="t" style="left:485.74px;top:468px;font-size:9.62px;line-height:9.62px;font-family:'Liberation Serif',serif;color:#000;transform:scaleX(0.84);transform-origin:0 0;letter-spacing:0px;-webkit-text-stroke:0.15px #000;">c</div>
<div style="position:absolute;left:491.4px;top:468.6px;width:8.4px;height:8.4px;border-radius:50%;background:#767676"></div>
</body></html>
